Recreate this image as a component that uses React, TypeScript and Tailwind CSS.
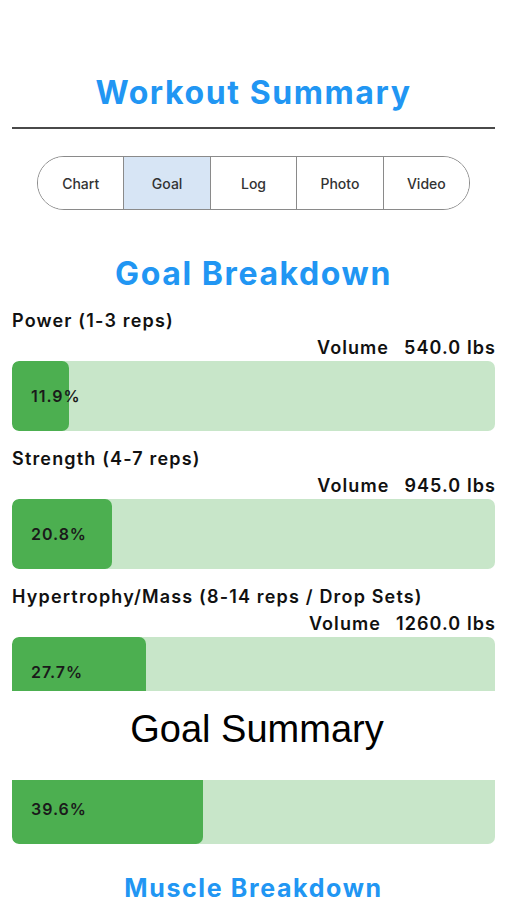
import React from "react";

const goals = [
  { label: "Power (1-3 reps)", volume: "540.0 lbs", pct: 11.9 },
  { label: "Strength (4-7 reps)", volume: "945.0 lbs", pct: 20.8 },
  { label: "Hypertrophy/Mass (8-14 reps / Drop Sets)", volume: "1260.0 lbs", pct: 27.7 },
];

function Bar({ pct, className = "" }: { pct: number; className?: string }) {
  return (
    <div className={"relative h-[70px] w-full rounded-[7px] bg-[#c8e6c9] overflow-hidden " + className}>
      <div className="absolute left-0 top-0 h-full rounded-[7px] bg-[#4caf50]" style={{ width: `${pct}%` }} />
      <div className="relative flex h-full items-center pl-[19px] text-[16px] font-semibold tracking-[0.06em] text-[#1a1a1a]">
        {pct.toFixed(1)}%
      </div>
    </div>
  );
}

export default function App() {
  const tabs = ["Chart", "Goal", "Log", "Photo", "Video"];
  return (
    <div className="w-[507px] h-[900px] overflow-hidden bg-white font-['Inter',sans-serif]">
      <div className="pt-[73px] text-center text-[32px] leading-[40px] font-bold tracking-[0.05em] text-[#2196f3]">
        Workout Summary
      </div>
      <div className="mx-3 mt-[14px] h-[2px] bg-[#4a4a4a]" />
      <div className="mx-[37px] mt-[27px] flex h-[54px] overflow-hidden rounded-full border-[1.5px] border-[#8a8a8a]">
        {tabs.map((t, i) => (
          <div
            key={t}
            className={
              "flex flex-1 items-center justify-center text-[14px] font-medium text-[#333] " +
              (i > 0 ? "border-l-[1.5px] border-[#8a8a8a] " : "") +
              (t === "Goal" ? "bg-[#d7e5f5]" : "bg-white")
            }
          >
            {t}
          </div>
        ))}
      </div>
      <div className="mt-[44px] text-center text-[32px] leading-[40px] font-bold tracking-[0.05em] text-[#2196f3]">
        Goal Breakdown
      </div>
      <div className="px-3">
        {goals.map((g, i) => (
          <div key={g.label} className={i === 0 ? "mt-[15px]" : "mt-[16px]"}>
            <div className="text-[18px] leading-[24px] font-semibold tracking-[0.065em] text-[#111]">{g.label}</div>
            <div className="mt-[3px] flex justify-end gap-[15px] text-[18px] leading-[24px] font-semibold tracking-[0.06em] text-[#111]">
              <span>Volume</span>
              <span className="-mr-[1px]">{g.volume}</span>
            </div>
            <div className="mt-[1px]">
              {i === 2 ? (
                <div className="h-[54px] overflow-hidden">
                  <Bar pct={g.pct} className="rounded-b-none" />
                </div>
              ) : (
                <Bar pct={g.pct} />
              )}
            </div>
          </div>
        ))}
        <div className="mt-[15px] pl-[7px] text-center font-['Liberation_Sans',sans-serif] text-[38px] leading-[46px] text-black">
          Goal Summary
        </div>
        <div className="mt-[28px] flex h-[64px] flex-col justify-end overflow-hidden">
          <Bar pct={39.6} className="shrink-0" />
        </div>
      </div>
      <div className="mt-[28px] text-center text-[25px] leading-[32px] font-bold tracking-[0.065em] text-[#2196f3]">
        Muscle Breakdown
      </div>
    </div>
  );
}
